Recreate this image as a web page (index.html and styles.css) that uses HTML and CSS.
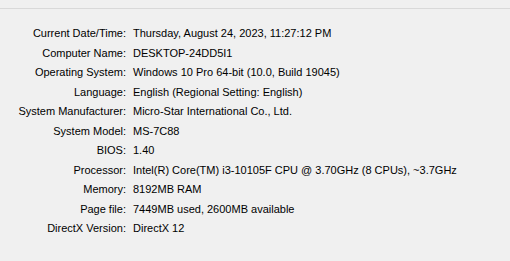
FILE: index.html
```html
<!DOCTYPE html>
<html>
<head>
<meta charset="utf-8">
<link rel="stylesheet" href="styles.css">
</head>
<body>
<div class="page">
  <div class="rule"></div>
  <dl class="info">
    <dt>Current Date/Time:</dt><dd>Thursday, August 24, 2023, 11:27:12 PM</dd>
    <dt>Computer Name:</dt><dd>DESKTOP-24DD5I1</dd>
    <dt>Operating System:</dt><dd>Windows 10 Pro 64-bit (10.0, Build 19045)</dd>
    <dt>Language:</dt><dd>English (Regional Setting: English)</dd>
    <dt>System Manufacturer:</dt><dd>Micro-Star International Co., Ltd.</dd>
    <dt>System Model:</dt><dd>MS-7C88</dd>
    <dt>BIOS:</dt><dd>1.40</dd>
    <dt>Processor:</dt><dd>Intel(R) Core(TM) i3-10105F CPU @ 3.70GHz (8 CPUs), ~3.7GHz</dd>
    <dt>Memory:</dt><dd>8192MB RAM</dd>
    <dt>Page file:</dt><dd>7449MB used, 2600MB available</dd>
    <dt>DirectX Version:</dt><dd>DirectX 12</dd>
  </dl>
</div>
</body>
</html>
```
FILE: styles.css
```css
html, body {
  margin: 0;
  padding: 0;
  background: #f0f0f0;
  width: 510px;
  height: 261px;
  overflow: hidden;
}
.page {
  font-family: "Liberation Sans", Arial, sans-serif;
  font-size: 11px;
  color: #000;
  padding-top: 8px;
}
.rule {
  height: 1px;
  background: #d9d9d9;
}
.info {
  display: grid;
  grid-template-columns: 126px 1fr;
  column-gap: 7px;
  margin: 15px 0 0 0;
  line-height: 19.5px;
}
.info dt {
  text-align: right;
  white-space: nowrap;
}
.info dd {
  margin: 0;
  white-space: nowrap;
}
```
